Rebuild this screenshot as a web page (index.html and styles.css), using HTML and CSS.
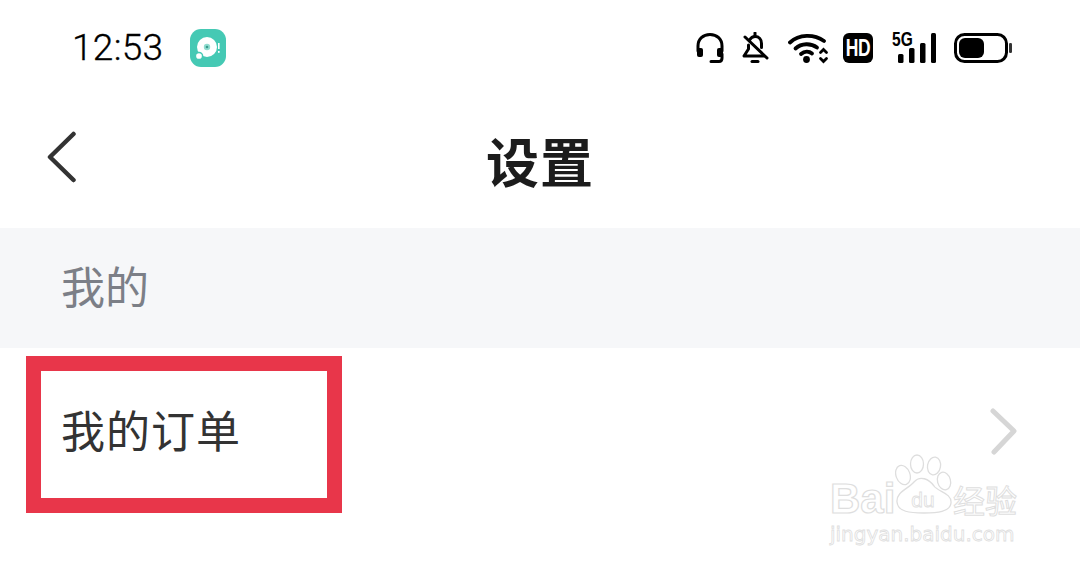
FILE: index.html
```html
<!DOCTYPE html>
<html lang="zh-CN">
<head>
<meta charset="utf-8">
<title>设置</title>
<link rel="stylesheet" href="styles.css">
</head>
<body>
<div class="screen">
  <header class="status">
    <div class="status-left">
      <span class="time">12:53</span>
      <svg class="app" width="36" height="38" viewBox="0 0 36 38">
        <rect x="0" y="0" width="36" height="38" rx="11" fill="#45c9b4"/>
        <circle cx="17" cy="18" r="10" fill="#fff"/>
        <circle cx="17" cy="18" r="3.2" fill="#8fdccf"/>
        <circle cx="17" cy="18" r="1.3" fill="#3a9a8b"/>
        <circle cx="9" cy="27" r="3.6" fill="#fff" stroke="#45c9b4" stroke-width="1.5"/>
        <rect x="28" y="14" width="1.6" height="6" fill="#fff"/>
        <rect x="28" y="22" width="1.6" height="1.8" fill="#fff"/>
      </svg>
    </div>
    <div class="status-right">
      <svg class="i-head" width="30" height="32" viewBox="0 0 30 32" fill="none" stroke="#000" stroke-width="3" stroke-linecap="round">
        <path d="M3 19V14C3 7 8 2.500 15 2.500S27 7 27 14V19"/>
        <rect x="2" y="16" width="6" height="9" rx="2" fill="#000" stroke="none"/>
        <rect x="22" y="16" width="6" height="9" rx="2" fill="#000" stroke="none"/>
        <path d="M27 22V26C27 28 26 29.500 24 29.500H16"/>
      </svg>
      <svg class="i-bell" width="28" height="32" viewBox="0 0 28 32" fill="none" stroke="#000" stroke-width="3" stroke-linecap="round" stroke-linejoin="round">
        <path d="M13 1V4"/>
        <path d="M7.500 8C9 5.500 11 4.500 13 4.500C17 4.500 19.500 7.500 19.500 11.500V15.500"/>
        <path d="M6.500 13V17L2 24H22"/>
        <path d="M3 5L25 26"/>
        <path d="M10 29.500H16"/>
      </svg>
      <svg class="i-wifi" width="41" height="31" viewBox="0 0 41 31" fill="none" stroke="#000" stroke-width="3.800" stroke-linecap="round">
        <path d="M2 9.500C11 1 26 1 36 8"/>
        <path d="M7.500 15.500C13.500 10 23 10 29 14.500"/>
        <path d="M13 21C16.500 18 21 18 24 20.500"/>
        <circle cx="18.500" cy="26.500" r="3.400" fill="#000" stroke="none"/>
        <path d="M32.500 19.500L35.500 16.500L38.500 19.500" stroke-width="2.800"/>
        <path d="M32.500 25.500L35.500 28.500L38.500 25.500" stroke-width="2.800"/>
      </svg>
      <span class="hd"><span class="hd-text">HD</span></span>
      <div class="signal">
        <span class="five-g">5G</span>
        <svg width="40" height="32" viewBox="0 0 40 32" fill="#000">
          <rect x="2" y="22" width="5.500" height="9" rx="1.500"/>
          <rect x="13" y="16" width="5.500" height="15" rx="1.500"/>
          <rect x="24" y="11" width="5.500" height="20" rx="1.500"/>
          <rect x="35" y="1" width="5" height="30" rx="1.500"/>
        </svg>
      </div>
      <svg class="i-batt" width="58" height="30" viewBox="0 0 58 30">
        <rect x="1.500" y="1.500" width="51" height="27" rx="9" fill="none" stroke="#000" stroke-width="3"/>
        <rect x="5" y="5" width="25" height="20" rx="6" fill="#000"/>
        <rect x="55" y="10" width="3" height="10" rx="1.200" fill="#333"/>
      </svg>
    </div>
  </header>

  <nav class="nav">
    <svg class="back" width="32" height="52" viewBox="0 0 32 52" fill="none" stroke="#333" stroke-width="4.500" stroke-linecap="round" stroke-linejoin="round">
      <path d="M27.500 3L4 26L27.500 49"/>
    </svg>
    <h1 class="title">设置</h1>
  </nav>

  <section class="group">我的</section>

  <div class="row">
    <span class="row-text">我的订单</span>
    <svg class="chev" width="30" height="48" viewBox="0 0 30 48" fill="none" stroke="#d6d6d6" stroke-width="5" stroke-linecap="round" stroke-linejoin="round">
      <path d="M4 3L25 23L5 44"/>
    </svg>
  </div>

  <div class="mark" aria-label="Baidu 经验">
    <div class="mark-top">
      <span class="mark-bai">Bai</span>
      <svg class="paw" width="58" height="60" viewBox="0 0 58 60" fill="#fff" stroke="#dedede" stroke-width="1.300">
        <ellipse cx="8" cy="21" rx="7" ry="10" transform="rotate(-20 8 21)"/>
        <ellipse cx="22" cy="10" rx="6.500" ry="9"/>
        <ellipse cx="39" cy="12" rx="6.500" ry="9" transform="rotate(10 39 12)"/>
        <ellipse cx="49" cy="27" rx="6.500" ry="9" transform="rotate(-15 49 27)"/>
        <path d="M2 48C1 38 13 35 19 28C25 21 34 25 39 32C43 38 57 39 56 49C55 58 42 59 29 59C15 59 3 58 2 48Z"/>
        <text class="mark-du" x="28" y="53" text-anchor="middle">du</text>
      </svg>
      <span class="mark-jy">经验</span>
    </div>
    <div class="mark-url">jingyan.baidu.com</div>
  </div>

  <div class="highlight"></div>
</div>
</body>
</html>
```

FILE: styles.css
```css
* { box-sizing: border-box; }
html, body { margin: 0; padding: 0; background: #fff; }
.screen {
  position: relative;
  width: 1080px;
  height: 570px;
  overflow: hidden;
  background: #fff;
  font-family: "Noto Sans CJK SC", "Noto Sans", sans-serif;
}
.status {
  height: 92px;
  display: flex;
  justify-content: space-between;
  align-items: center;
  padding: 4px 68px 0 72px;
}
.status-left { display: flex; align-items: center; gap: 27px; }
.time {
  font-family: Roboto, sans-serif;
  font-size: 37px;
  font-weight: 300;
  color: #000;
  letter-spacing: 0.3px;
  line-height: 40px;
  -webkit-text-stroke: 0.300px #000;
}
.status-right { display: flex; align-items: center; }
.i-head { margin-right: 17px; }
.i-bell { margin-right: 18px; }
.i-wifi { margin-right: 14px; }
.hd {
  width: 30px;
  height: 30px;
  margin-right: 19px;
  background: #000;
  color: #fff;
  border-radius: 6px;
  display: flex;
  align-items: center;
  justify-content: center;
}
.hd-text {
  font-family: "Liberation Sans", sans-serif;
  font-weight: 700;
  font-size: 23px;
  line-height: 30px;
  letter-spacing: -0.5px;
  transform: scaleX(0.76);
}
.signal { position: relative; width: 44px; height: 32px; margin-right: 18px; display: flex; justify-content: flex-end; }
.five-g {
  position: absolute;
  left: 0;
  top: -3px;
  font-family: "Liberation Sans", sans-serif;
  font-weight: 700;
  font-size: 21px;
  line-height: 20px;
  letter-spacing: 0;
  color: #000;
  transform: scaleX(0.74);
  transform-origin: left center;
}
.nav {
  position: relative;
  height: 136px;
  display: flex;
  align-items: center;
  justify-content: center;
}
.back { position: absolute; left: 46px; top: 39px; }
.title {
  margin: 0;
  font-size: 53px;
  font-weight: 700;
  color: #1c1c1c;
  line-height: 64px;
  letter-spacing: 1px;
}
.group {
  height: 120px;
  background: #f6f7f9;
  padding: 0 0 6px 61px;
  display: flex;
  align-items: center;
  font-size: 44px;
  color: #7c7f87;
}
.row {
  height: 168px;
  padding: 0 62px 6px 61px;
  display: flex;
  align-items: center;
  justify-content: space-between;
  font-size: 44px;
  letter-spacing: 1px;
  color: #333;
}
.chev { margin: 6px -1px 0 0; }
.highlight {
  position: absolute;
  left: 26px;
  top: 356px;
  width: 316px;
  height: 157px;
  border: 15px solid #e8364a;
}
.mark { position: absolute; left: 830px; top: 450px; width: 195px; }
.mark-top { display: flex; align-items: flex-end; height: 65px; }
.mark-bai {
  width: 65px;
  flex: none;
  font-family: "Liberation Sans", sans-serif;
  font-size: 42px;
  line-height: 44px;
  font-weight: 700;
  margin-bottom: -6px;
  color: #fff;
  -webkit-text-stroke: 1.200px #dedede;
}
.paw { margin-bottom: 1px; flex: none; }
.mark-du {
  font-family: "Liberation Sans", sans-serif;
  font-size: 21px;
  fill: #fff;
  stroke: #dedede;
  stroke-width: 0.800;
}
.mark-jy {
  font-size: 32px;
  line-height: 40px;
  margin-bottom: -4px;
  color: #fff;
  -webkit-text-stroke: 1px #dedede;
  white-space: nowrap;
}
.mark-url {
  font-family: "DejaVu Sans", sans-serif;
  font-size: 20px;
  line-height: 26px;
  margin-top: 6px;
  color: #fff;
  -webkit-text-stroke: 0.800px #dedede;
  white-space: nowrap;
}
```
